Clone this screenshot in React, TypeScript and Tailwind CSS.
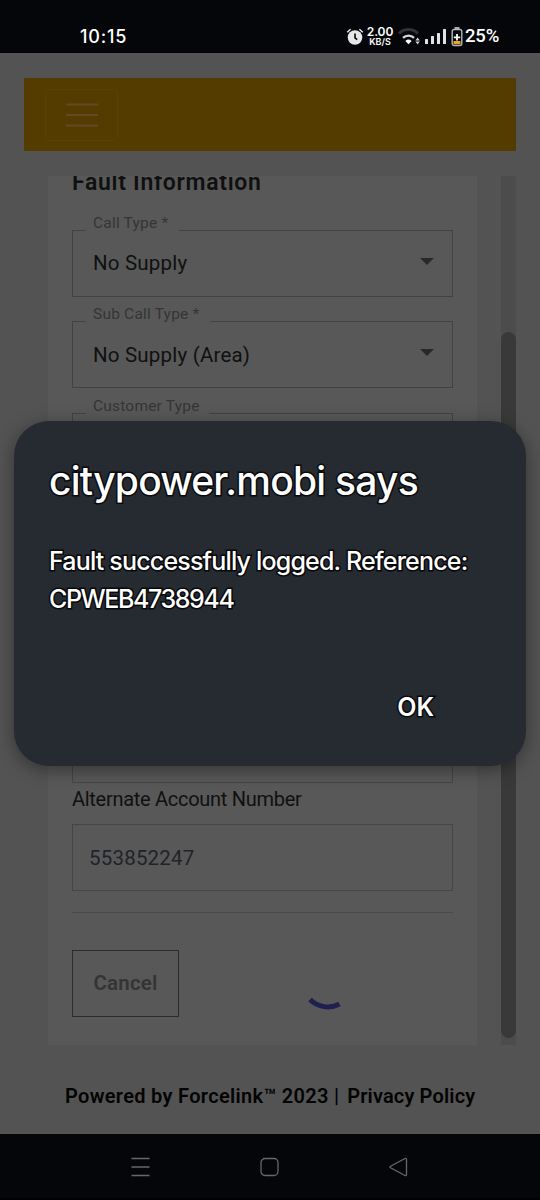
function StatusBar() {
    return (
        <header className="flex h-[53px] shrink-0 items-center bg-[#050609] pl-20 pt-5 text-white">
            <span className="font-['Inter',sans-serif] text-lg leading-none font-medium tracking-[0.8px]">10:15</span>
            <div className="ml-auto mr-[41px] flex items-center">
                {/* Alarm */}
                <svg className="h-5 w-[18px]" viewBox="0 0 18 20" fill="none">
                    <circle cx="9" cy="10.5" r="7.3" fill="#e6e7e9" />
                    <path d="M1.2 5.2 4.6 2.2M16.8 5.2l-3.4-3" stroke="#e6e7e9" strokeWidth="1.5" />
                    <path d="M9 6.5v4.3l2.2 1.8" stroke="#050609" strokeWidth="1.6" />
                </svg>
                <div className="ml-0.5 flex w-[28px] flex-col items-center font-['Inter',sans-serif] font-semibold">
                    <div className="h-[10px] text-[12px] leading-[10px] tracking-[-0.1px] whitespace-nowrap">2.00</div>
                    <div className="h-[9px] text-[9px] leading-[9px]">KB/S</div>
                </div>
                {/* Wifi */}
                <svg className="ml-1 h-5 w-[23px]" viewBox="0 0 23 20" fill="none">
                    <path d="M1 6.5a13.5 13.5 0 0 1 19 0" stroke="#303235" strokeWidth="3" />
                    <path d="M5 10.8a8 8 0 0 1 11 0" stroke="#d4d6d8" strokeWidth="2.4" />
                    <path d="M7.4 14a4.5 4.5 0 0 1 6.2 0l-3.1 3.2z" fill="#fff" />
                    <path d="m19.6 10.4 2.2 3h-4.4zM19.6 17.5l2.2-2.9h-4.4z" fill="#cfd1d3" />
                </svg>
                {/* Signal */}
                <svg className="ml-[3px] h-5 w-[23px]" viewBox="0 0 23 20" fill="#e1e2e4">
                    <rect x="1" y="12" width="3" height="5" rx=".5" />
                    <rect x="7" y="9" width="3" height="8" rx=".5" />
                    <rect x="13" y="6" width="3" height="11" rx=".5" />
                    <rect x="19" y="2" width="3" height="15" rx=".5" />
                </svg>
                {/* Battery */}
                <svg className="ml-1 h-5 w-3" viewBox="0 0 12 20" fill="none">
                    <path d="M3.5 0h5v2h-5z" fill="#a8a8aa" />
                    <rect x="1.2" y="2.5" width="9.6" height="16" rx="2" stroke="#b6b6b8" strokeWidth="1.4" />
                    <path d="M2.5 14h7v3.2h-7z" fill="#e9a91c" />
                    <path d="M6 7v6.6M2.8 10.3h6.4" stroke="#fff" strokeWidth="1.8" />
                </svg>
                <span className="ml-[2px] w-[34px] text-[18.5px] leading-none font-medium tracking-[-0.2px]">25%</span>
            </div>
        </header>
    );
}

function SelectField({ label, value, notch }: { label: string; value?: string; notch: string }) {
    return (
        <div className="relative flex h-[67px] shrink-0 items-center border-[1.5px] border-[#424242] pr-[18px] pl-5">
            <span
                className={`absolute -top-[18px] left-[13px] h-5 bg-[#585858] pl-[7px] text-[15.5px] leading-5 tracking-[0.2px] whitespace-nowrap text-[#353535] ${notch}`}
            >
                {label}
            </span>
            <span className="pt-px text-[20.5px] tracking-[0.2px] text-[#101010]">{value}</span>
            {value && (
                <svg className="mb-1 ml-auto h-[7px] w-[14px]" viewBox="0 0 14 7" fill="#282828">
                    <path d="M0 0h14L7 7z" />
                </svg>
            )}
        </div>
    );
}

function FaultForm() {
    return (
        <div className="flex h-[869px] w-[429px] flex-col overflow-hidden bg-[#585858] px-6">
            <h2 className="-mt-[7px] h-[60.5px] shrink-0 text-[23px] leading-7 font-semibold tracking-[0.7px] whitespace-nowrap text-[#101010]">
                Fault Information
            </h2>
            <div className="flex flex-col gap-[24.5px]">
                <SelectField label="Call Type *" value="No Supply" notch="w-[93px]" />
                <SelectField label="Sub Call Type *" value="No Supply (Area)" notch="w-[124px]" />
                <SelectField label="Customer Type" notch="w-[123px]" />
            </div>
            <div className="mt-[236px] h-[67px] shrink-0 border-[1.5px] border-[#454545]" />
            <label className="mt-[3px] flex h-[38px] shrink-0 text-[20px] leading-[26px] tracking-[-0.28px] whitespace-nowrap text-[#101010]">
                Alternate Account Number
            </label>
            <div className="flex h-[67px] shrink-0 items-center border-[1.5px] border-[#454545] pt-[2px] pl-4 text-[20.5px] tracking-[0.2px] text-[#20232a]">
                553852247
            </div>
            <hr className="mt-[21px] border-t-[1.5px] border-[#4b4b4b]" />
            <div className="mt-[37px] flex">
                <button className="h-[67px] w-[107px] border-[1.5px] border-[#2c2c2c] text-[20.5px] font-semibold tracking-[0.2px] text-[#343434]">
                    Cancel
                </button>
                <svg className="mt-[10px] ml-[124px] h-14 w-12" viewBox="0 0 48 56" fill="none">
                    <path d="M7 39.5A25 25 0 0 0 36.5 44" stroke="#1f2050" strokeWidth="5" />
                </svg>
            </div>
        </div>
    );
}

function AlertDialog() {
    return (
        <div
            role="alertdialog"
            className="absolute top-[421px] left-[14px] h-[345px] w-[512px] rounded-[35px] bg-[#262a31] px-[35px] pt-9 font-['Inter',sans-serif] font-medium whitespace-nowrap text-white shadow-[0_4px_18px_rgba(0,0,0,0.4)] [paint-order:stroke_fill] [-webkit-text-stroke:3px_#08090b]"
        >
            <h1 className="text-[39px] leading-[48px] tracking-[-0.76px]">citypower.mobi says</h1>
            <p className="mt-[37px] text-[25px] leading-[38px] tracking-[-0.82px]">
                Fault successfully logged. Reference:
                <br />
                <span className="tracking-[-1.4px]">CPWEB4738944</span>
            </p>
            <div className="mt-[73px] flex justify-end pr-[57px]">
                <button className="text-[25px] leading-8 font-semibold">OK</button>
            </div>
        </div>
    );
}

function NavBar() {
    return (
        <nav className="h-[66px] shrink-0 border-b-2 border-black bg-[#050609] px-[131px] pt-[23px]">
            <div className="flex justify-between text-[#66686a]">
                <svg className="h-5 w-5" viewBox="0 0 20 20" fill="none" stroke="currentColor" strokeWidth="1.5">
                    <path d="M.5 1.5h18M.5 10h18M.5 18.5h18" />
                </svg>
                <svg className="h-5 w-5" viewBox="0 0 20 20" fill="none" stroke="currentColor" strokeWidth="1.3">
                    <rect x="1" y="1.5" width="17" height="17" rx="4" />
                </svg>
                <svg className="h-5 w-5" viewBox="0 0 20 20" fill="none" stroke="currentColor" strokeWidth="1.3">
                    <path d="M16 1.5 1.5 9.2q-1.4.8 0 1.6L16 18.5q1.5.6 1.5-1V2.5q0-1.6-1.5-1z" />
                </svg>
            </div>
        </nav>
    );
}

export default function App() {
    return (
        <div className="relative flex h-[1200px] w-[540px] flex-col overflow-hidden bg-[#535353] font-['Roboto',sans-serif]">
            <StatusBar />
            <main className="flex flex-1 flex-col pt-[25px]">
                {/* Site header */}
                <div className="mx-6 flex h-[73px] items-center bg-[#543c00] pl-[21px]">
                    <button className="flex h-[52px] w-[73px] items-center justify-center rounded border border-[#594006]">
                        <svg className="h-6 w-8" viewBox="0 0 32 24" stroke="#604926" strokeWidth="2">
                            <path d="M0 1.5h32M0 12h32M0 22.5h32" />
                        </svg>
                    </button>
                </div>
                <div className="mt-[25px] flex pl-12">
                    <FaultForm />
                    <div className="ml-6 h-[869px] w-[15px] bg-[#4c4c4c] pt-[156px]">
                        <div className="h-[706px] rounded-full bg-[#393939]" />
                    </div>
                </div>
                <footer className="mt-9 flex pl-[65px] text-xl leading-[30px] font-semibold whitespace-nowrap text-[#030303]">
                    <span className="tracking-[0.32px]">Powered by Forcelink™ 2023 |</span>
                    <a className="ml-2 tracking-[0.15px]">Privacy Policy</a>
                </footer>
            </main>
            <NavBar />
            <AlertDialog />
        </div>
    );
}
